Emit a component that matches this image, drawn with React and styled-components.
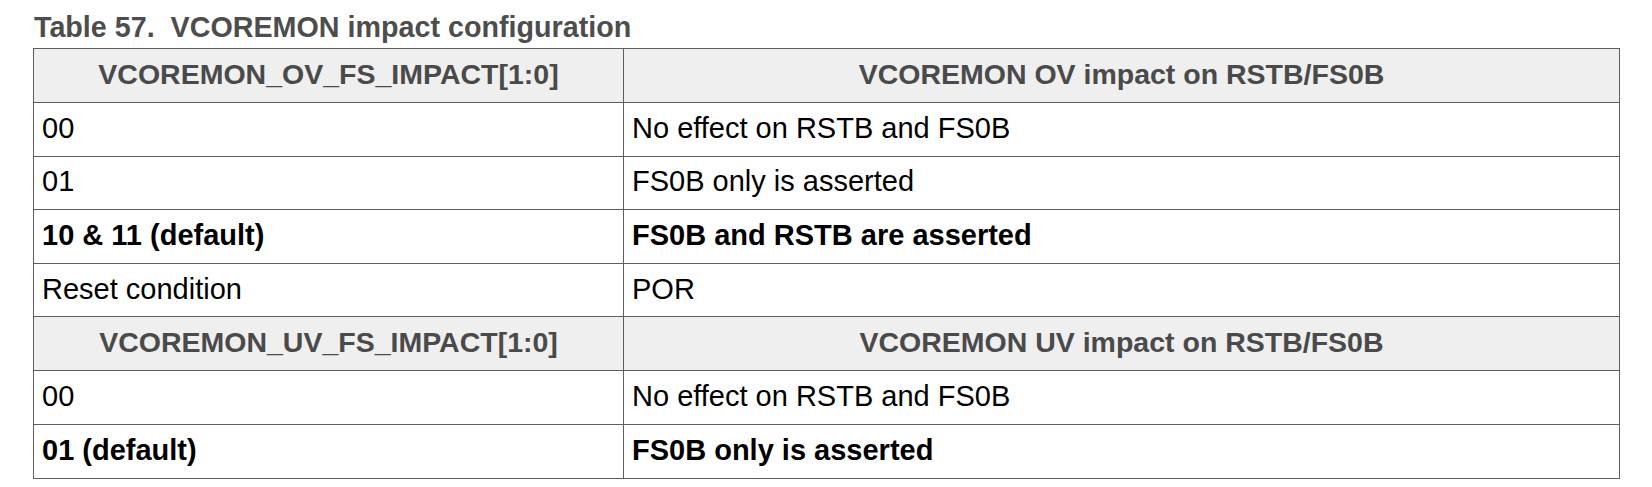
import React from 'react'
import styled, { createGlobalStyle } from 'styled-components'

const GlobalStyle = createGlobalStyle`
    html, body {
        margin: 0;
        padding: 0;
        background: #ffffff;
    }
    body {
        font-family: "Liberation Sans", Arial, sans-serif;
    }
`;

const Page = styled.div`
    padding: 13px 0 0 33px;
    width: 1652px;
    height: 487px;
    box-sizing: border-box;
`;

const Caption = styled.div`
    font-size: 28.7px;
    line-height: 29px;
    font-weight: 700;
    color: #4d4d4d;
    padding-left: 1px;
    margin-bottom: 6px;
`;

const Table = styled.table`
    border-collapse: collapse;
    table-layout: fixed;
    width: 1586px;
`;

const HeadRow = styled.tr`
    background: #efefef;
`;

const HeadCell = styled.th`
    height: 50px;
    padding: 0 8px 3px;
    border: 1px solid #5e5e5e;
    font-size: 28.5px;
    line-height: 32px;
    font-weight: 700;
    color: #4a4a4a;
    text-align: center;
    vertical-align: middle;
`;

const Cell = styled.td`
    height: 49.6px;
    padding: 0 8px 3px;
    border: 1px solid #5e5e5e;
    font-size: 29px;
    line-height: 32px;
    font-weight: ${p => (p.$bold ? 700 : 400)};
    color: #000;
    text-align: left;
    vertical-align: middle;
    white-space: nowrap;
`;

const sections = [
    {
        head: ['VCOREMON_OV_FS_IMPACT[1:0]', 'VCOREMON OV impact on RSTB/FS0B'],
        rows: [
            ['00', 'No effect on RSTB and FS0B'],
            ['01', 'FS0B only is asserted'],
            ['10 & 11 (default)', 'FS0B and RSTB are asserted', true],
            ['Reset condition', 'POR'],
        ],
    },
    {
        head: ['VCOREMON_UV_FS_IMPACT[1:0]', 'VCOREMON UV impact on RSTB/FS0B'],
        rows: [
            ['00', 'No effect on RSTB and FS0B'],
            ['01 (default)', 'FS0B only is asserted', true],
        ],
    },
];

export default function App() {
    return (
        <Page>
            <GlobalStyle />
            <Caption>Table 57.&nbsp; VCOREMON impact configuration</Caption>
            <Table>
                <colgroup>
                    <col style={{ width: 590 }} />
                    <col style={{ width: 996 }} />
                </colgroup>
                <tbody>
                    {sections.map((s, i) => (
                        <React.Fragment key={i}>
                            <HeadRow>
                                <HeadCell>{s.head[0]}</HeadCell>
                                <HeadCell>{s.head[1]}</HeadCell>
                            </HeadRow>
                            {s.rows.map((r, j) => (
                                <tr key={j}>
                                    <Cell $bold={r[2]}>{r[0]}</Cell>
                                    <Cell $bold={r[2]}>{r[1]}</Cell>
                                </tr>
                            ))}
                        </React.Fragment>
                    ))}
                </tbody>
            </Table>
        </Page>
    )
}
